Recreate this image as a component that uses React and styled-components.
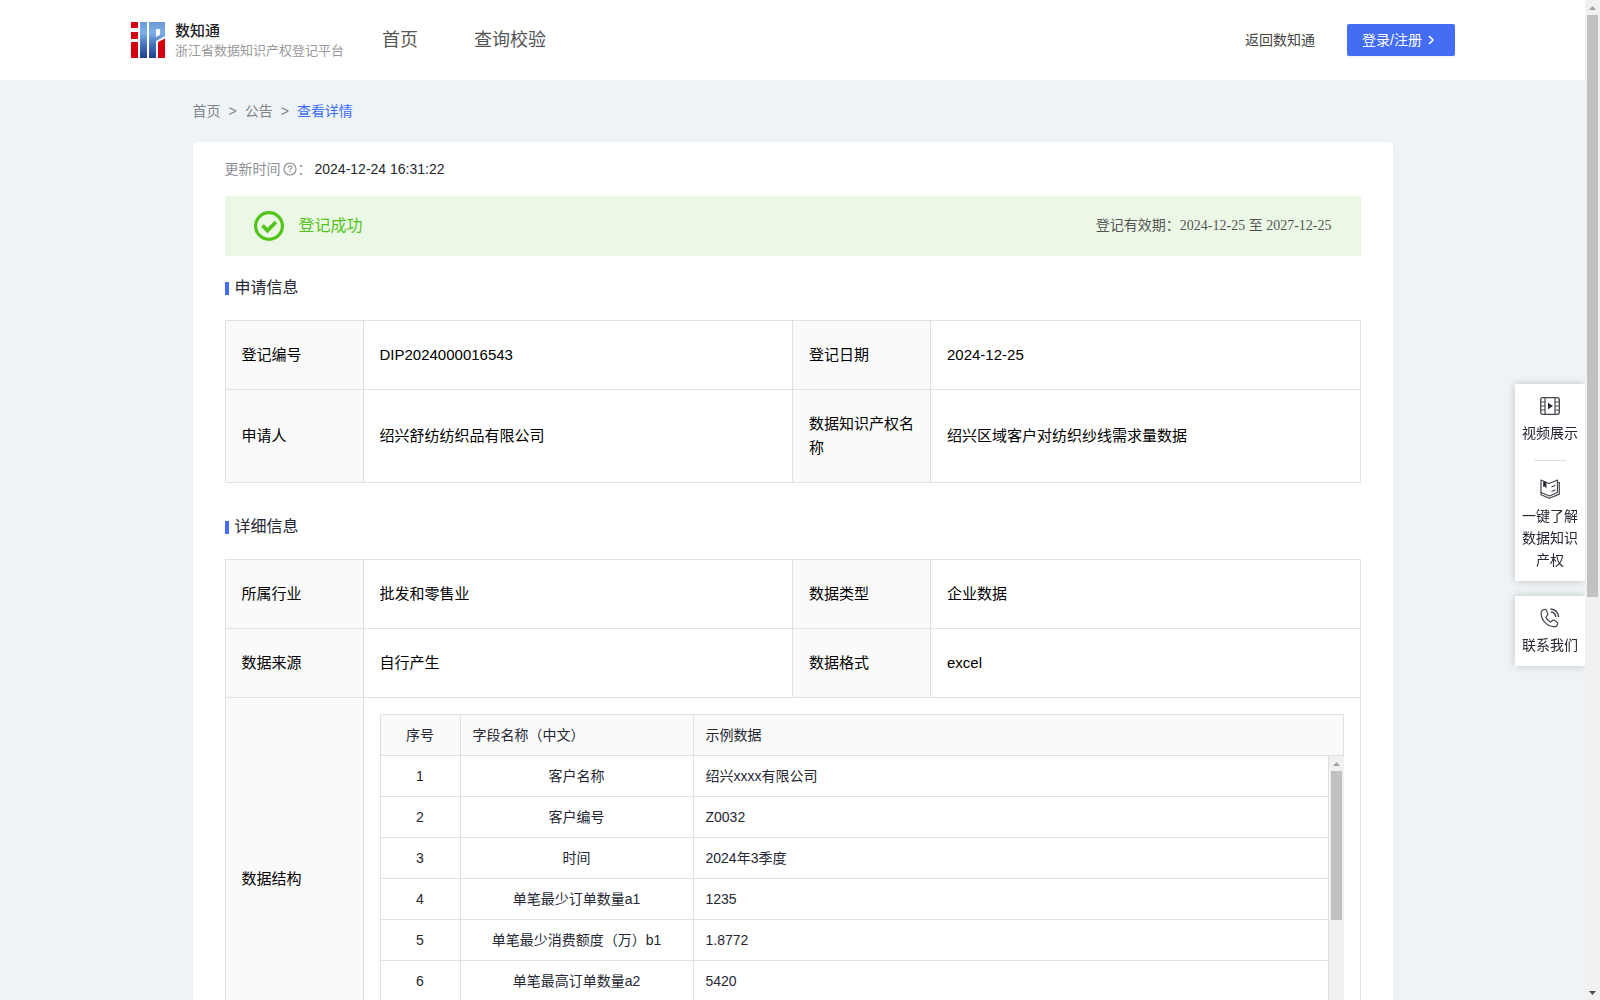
import React from 'react';
import styled, { createGlobalStyle } from 'styled-components';

const GlobalStyle = createGlobalStyle`
	* {
		box-sizing: border-box;
	}
	body {
		margin: 0;
		color: #252733;
		font-family: 'Liberation Sans', 'Noto Sans CJK SC', sans-serif;
		font-size: 14px;
		line-height: 22px;
	}
	a {
		color: inherit;
		text-decoration: none;
	}
	button {
		font: inherit;
		border: 0;
		cursor: pointer;
	}
`;

const Shell = styled.div`
	display: flex;
	height: 100vh;
	overflow: hidden;
`;

const Page = styled.div`
	flex: 1;
	min-width: 0;
	overflow-y: auto;
	scrollbar-width: none;
	background-color: #eef3f6;
`;

const Header = styled.header`
	display: flex;
	align-items: center;
	height: 80px;
	padding: 0 130px;
	background-color: #fff;
`;

const Brand = styled.a`
	display: flex;
	align-items: center;
	gap: 10px;
	margin-right: 38px;
	svg {
		display: block;
	}
	.names {
		display: flex;
		flex-direction: column;
		font-family: 'Noto Sans CJK SC', sans-serif;
	}
	strong {
		color: #222;
		font-size: 15px;
		font-weight: 500;
		line-height: 20px;
	}
	span span {
		color: #999;
		font-size: 13px;
		line-height: 20px;
	}
`;

const Nav = styled.nav`
	display: flex;
	gap: 56px;
	flex: 1;
	color: #555;
	font-size: 18px;
`;

const BackLink = styled.a`
	margin-right: 32px;
	color: #444;
`;

const LoginButton = styled.button`
	display: flex;
	align-items: center;
	gap: 2px;
	width: 108px;
	height: 32px;
	padding: 0 15px;
	border-radius: 2px;
	color: #fff;
	background-color: #446df6;
	box-shadow: 0 2px 0 rgba(0, 0, 0, 0.04);
	white-space: nowrap;
`;

const Main = styled.main`
	max-width: 1200px;
	margin: 0 auto;
`;

const Breadcrumb = styled.nav`
	display: flex;
	gap: 8px;
	padding: 20px 0;
	color: #808389;
	a[aria-current] {
		color: #3d6ef5;
	}
`;

const Card = styled.section`
	padding: 16px 32px 32px;
	border-radius: 4px;
	background-color: #fff;
`;

const UpdateTime = styled.div`
	display: flex;
	align-items: center;
	margin-bottom: 16px;
	color: #8f9096;
	svg {
		margin: 0 1px 0 2px;
	}
	time {
		margin-left: 3px;
		color: #252733;
	}
`;

const Banner = styled.div`
	display: flex;
	align-items: center;
	height: 60px;
	padding: 0 29px;
	background-color: #ebf8e6;
	.status {
		flex: 1;
		margin-left: 15px;
		color: #52c41a;
		font-size: 16px;
	}
	.valid {
		color: #555;
		font-family: 'Liberation Serif', 'Noto Sans CJK SC', serif;
	}
`;

const SectionTitle = styled.h2`
	display: flex;
	align-items: center;
	gap: 6px;
	margin: 0;
	padding: 20px 0;
	font-size: 16px;
	font-weight: 400;
	line-height: 24px;
	&::before {
		content: '';
		width: 4px;
		height: 13px;
		background-color: #446df6;
	}
`;

const InfoTable = styled.table`
	width: 100%;
	margin-bottom: 12px;
	border-collapse: collapse;
	table-layout: fixed;
	color: #000;
	font-size: 15px;
	line-height: 24px;
	th,
	td {
		padding: 22px 16px;
		border: 1px solid #e1e1e1;
		font-weight: 400;
		text-align: left;
	}
	th {
		background-color: #fafafa;
	}
	col.label {
		width: 138px;
	}
	td.nested {
		padding: 16px;
	}
`;

const FieldBox = styled.div`
	border: solid #e1e1e1;
	border-width: 1px 0 0 1px;
	color: #252733;
	font-size: 14px;
	line-height: 22px;
`;

const FieldBody = styled.div`
	display: flex;
	height: 287px;
	overflow: hidden;
	.rows {
		flex: 1;
		min-width: 0;
	}
`;

const FieldTable = styled.table`
	width: 100%;
	border-collapse: separate;
	border-spacing: 0;
	table-layout: fixed;
	font-size: 14px;
	line-height: 22px;
	th,
	td {
		padding: 9px 12px;
		border-width: 0 1px 1px 0;
	}
	th:first-child,
	td:first-child,
	td:nth-child(2) {
		text-align: center;
	}
	col.index {
		width: 80px;
	}
	col.name {
		width: 233px;
	}
`;

const Track = styled.div`
	display: flex;
	flex-direction: column;
	width: 15px;
	flex-shrink: 0;
	background-color: #f1f1f1;
	svg {
		display: block;
		flex-shrink: 0;
	}
	.lane {
		flex: 1;
		padding: 0 2px;
	}
`;

const Thumb = styled.div`
	height: ${({ $size }) => $size};
	background-color: #c1c1c1;
`;

const SideTools = styled.aside`
	position: fixed;
	top: 384px;
	right: 15px;
	display: flex;
	flex-direction: column;
	gap: 15px;
	width: 70px;
	clip-path: inset(-12px 0 -12px -12px);
`;

const SidePanel = styled.div`
	background-color: #fff;
	box-shadow: 0 0 8px rgba(0, 0, 0, 0.2);
	hr {
		width: 32px;
		height: 1px;
		margin: 6px auto;
		border: 0;
		background-color: #dedede;
	}
`;

const SideButton = styled.button`
	display: flex;
	flex-direction: column;
	align-items: center;
	gap: 6px;
	width: 100%;
	padding: 12px 7px 10px;
	color: #252733;
	background-color: transparent;
`;

const applyRows = [
	['登记编号', 'DIP2024000016543', '登记日期', '2024-12-25'],
	['申请人', '绍兴舒纺纺织品有限公司', '数据知识产权名称', '绍兴区域客户对纺织纱线需求量数据'],
];

const detailRows = [
	['所属行业', '批发和零售业', '数据类型', '企业数据'],
	['数据来源', '自行产生', '数据格式', 'excel'],
];

const fields = [
	['客户名称', '绍兴xxxx有限公司'],
	['客户编号', 'Z0032'],
	['时间', '2024年3季度'],
	['单笔最少订单数量a1', '1235'],
	['单笔最少消费额度（万）b1', '1.8772'],
	['单笔最高订单数量a2', '5420'],
];

function Logo() {
	return (
		<svg width="35" height="36" viewBox="-1 0 35 36" aria-hidden="true">
			<defs>
				<linearGradient id="logoBlue" gradientUnits="userSpaceOnUse" x1="0" y1="0" x2="0" y2="36">
					<stop offset="0" stopColor="#6a98d4" />
					<stop offset="0.3" stopColor="#7fb0e8" />
					<stop offset="0.6" stopColor="#4a76be" />
					<stop offset="1" stopColor="#203c8c" />
				</linearGradient>
			</defs>
			<path d="M0 0h7v6H0zM0 10h7v7H0zM0 20h7v16H0z" fill="#d5000f" />
			<path d="M9 0h7v36H9z" fill="url(#logoBlue)" />
			<path
				d="M18 0h16v14l-9 5v17h-7zM25 7v8l4-2.200V7z"
				fill="url(#logoBlue)"
				fillRule="evenodd"
			/>
			<path d="M27 20l7-3.500V36h-7z" fill="#d5000f" />
		</svg>
	);
}

function QuestionIcon() {
	return (
		<svg width="14" height="14" viewBox="0 0 14 14" fill="none" stroke="#8f9096" aria-hidden="true">
			<circle cx="7" cy="7" r="6" strokeWidth="1.200" />
			<path d="M5.200 5.600c0-2.200 3.700-2.200 3.700 0C8.900 6.900 7 6.900 7 8.400M7 9.500v1.200" strokeWidth="1.200" />
		</svg>
	);
}

function SuccessIcon() {
	return (
		<svg width="30" height="30" viewBox="0 0 30 30" fill="none" stroke="#52c41a" aria-hidden="true">
			<circle cx="15" cy="15" r="13.400" strokeWidth="3.200" />
			<path d="M8.500 14.500l5 5 8.500-8.500" strokeWidth="3.800" />
		</svg>
	);
}

function VideoIcon() {
	return (
		<svg width="20" height="20" viewBox="0 0 20 20" fill="none" stroke="#45464f" aria-hidden="true">
			<rect x="0.700" y="1.700" width="18.600" height="16.600" rx="2" strokeWidth="1.300" />
			<path d="M5 2v16M15 2v16M1 6h4M1 10h4M1 14h4M15 6h4M15 10h4M15 14h4" strokeWidth="1.200" />
			<path d="M8 6.800l5 3.200-5 3.200z" fill="#252733" stroke="none" />
		</svg>
	);
}

function BookIcon() {
	return (
		<svg
			width="20"
			height="20"
			viewBox="0 0 20 20"
			fill="none"
			stroke="#45464f"
			strokeWidth="1.200"
			strokeLinejoin="round"
			aria-hidden="true"
		>
			<path d="M1 1l8 3.500L17.500 1v12.500L9.500 17 1 13.500z" />
			<path d="M1 13.500v2.300L9.500 19.300l9.800-4.200V3.500h-1.800" />
			<path d="M11.500 8l4-1.700M11.500 12.500l4-1.700" />
			<path d="M3.200 2l3.200 1.400v6L4.800 7.500l-1.600.600z" fill="#252733" stroke="none" />
		</svg>
	);
}

function PhoneIcon() {
	return (
		<svg
			width="20"
			height="20"
			viewBox="0 0 20 20"
			fill="none"
			stroke="#45464f"
			strokeWidth="1.200"
			strokeLinejoin="round"
			aria-hidden="true"
		>
			<path d="M4.700 1.300C2.500 1.500 1 3.300 1.100 5.600c.300 7 6.200 12.600 12.600 13.100 2 .100 3.800-1.300 4-3.100.100-.800-.300-1.300-.900-1.700l-2.700-1.600c-.700-.400-1.300-.300-1.800.200l-1 1.200c-.400.400-.900.400-1.400.100-1.700-1.100-3-2.500-3.900-4.200-.200-.500-.100-.900.300-1.200l1.100-.9c.600-.500.700-1.100.400-1.800L6.500 2.400c-.400-.800-1-1.200-1.800-1.100z" />
			<path d="M10.500 1c4.500.300 7.800 3.400 8.200 8M10.800 4c2.800.200 4.700 2 5 5" strokeWidth="1.500" />
		</svg>
	);
}

function Arrow({ down, color }) {
	return (
		<svg width="15" height="15" viewBox="0 0 15 15" fill={color} aria-hidden="true">
			<path d={down ? 'M4 6h7l-3.500 4z' : 'M4 10h7L7.500 6z'} />
		</svg>
	);
}

function ScrollTrack({ size }) {
	return (
		<Track aria-hidden="true">
			<Arrow color="#a3a3a3" />
			<div className="lane">
				<Thumb $size={size} />
			</div>
			<Arrow down color="#505050" />
		</Track>
	);
}

function InfoColumns() {
	return (
		<colgroup>
			<col className="label" />
			<col />
			<col className="label" />
			<col />
		</colgroup>
	);
}

function InfoRow({ row }) {
	return (
		<tr>
			<th scope="row">{row[0]}</th>
			<td>{row[1]}</td>
			<th scope="row">{row[2]}</th>
			<td>{row[3]}</td>
		</tr>
	);
}

function FieldColumns() {
	return (
		<colgroup>
			<col className="index" />
			<col className="name" />
			<col />
		</colgroup>
	);
}

function FieldList() {
	return (
		<FieldBox>
			<FieldTable>
				<FieldColumns />
				<thead>
					<tr>
						<th scope="col">序号</th>
						<th scope="col">字段名称（中文）</th>
						<th scope="col">示例数据</th>
					</tr>
				</thead>
			</FieldTable>
			<FieldBody>
				<div className="rows">
					<FieldTable>
						<FieldColumns />
						<tbody>
							{fields.map(([name, sample], i) => (
								<tr key={name}>
									<td>{i + 1}</td>
									<td>{name}</td>
									<td>{sample}</td>
								</tr>
							))}
						</tbody>
					</FieldTable>
				</div>
				<ScrollTrack size="58%" />
			</FieldBody>
		</FieldBox>
	);
}

export default function App() {
	return (
		<Shell>
			<GlobalStyle />
			<Page>
				<Header>
					<Brand href="#">
						<Logo />
						<span className="names">
							<strong>数知通</strong>
							<span>浙江省数据知识产权登记平台</span>
						</span>
					</Brand>
					<Nav>
						<a href="#home">首页</a>
						<a href="#verify">查询校验</a>
					</Nav>
					<BackLink href="#back">返回数知通</BackLink>
					<LoginButton type="button">
						登录/注册
						<svg width="14" height="14" viewBox="0 0 14 14" fill="none" stroke="#fff" strokeWidth="1.600">
							<path d="M5 3l4 4-4 4" />
						</svg>
					</LoginButton>
				</Header>
				<Main>
					<Breadcrumb>
						<a href="#home">首页</a>
						<span>&gt;</span>
						<a href="#notice">公告</a>
						<span>&gt;</span>
						<a href="#detail" aria-current="page">
							查看详情
						</a>
					</Breadcrumb>
					<Card>
						<UpdateTime>
							更新时间
							<QuestionIcon />：<time>2024-12-24 16:31:22</time>
						</UpdateTime>
						<Banner>
							<SuccessIcon />
							<span className="status">登记成功</span>
							<span className="valid">登记有效期：2024-12-25 至 2027-12-25</span>
						</Banner>
						<SectionTitle>申请信息</SectionTitle>
						<InfoTable>
							<InfoColumns />
							<tbody>
								{applyRows.map((row) => (
									<InfoRow key={row[0]} row={row} />
								))}
							</tbody>
						</InfoTable>
						<SectionTitle>详细信息</SectionTitle>
						<InfoTable>
							<InfoColumns />
							<tbody>
								{detailRows.map((row) => (
									<InfoRow key={row[0]} row={row} />
								))}
								<tr>
									<th scope="row">数据结构</th>
									<td className="nested" colSpan={3}>
										<FieldList />
									</td>
								</tr>
							</tbody>
						</InfoTable>
					</Card>
				</Main>
			</Page>
			<ScrollTrack size="60%" />
			<SideTools>
				<SidePanel>
					<SideButton type="button">
						<VideoIcon />
						视频展示
					</SideButton>
					<hr />
					<SideButton type="button">
						<BookIcon />
						一键了解数据知识产权
					</SideButton>
				</SidePanel>
				<SidePanel>
					<SideButton type="button">
						<PhoneIcon />
						联系我们
					</SideButton>
				</SidePanel>
			</SideTools>
		</Shell>
	);
}
